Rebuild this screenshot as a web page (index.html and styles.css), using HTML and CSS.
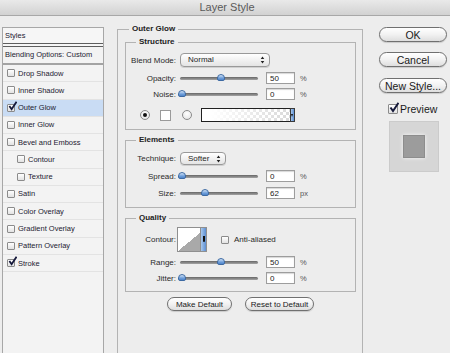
FILE: index.html
```html
<!DOCTYPE html>
<html lang="en">

<head>
    <meta charset="UTF-8">
    <title>Layer Style</title>
    <link rel="stylesheet" href="styles.css">
</head>

<body>
    <div class="window">
        <div class="titlebar">Layer Style</div>

        <div class="dialog">
            <!-- left list of effects -->
            <div class="styles-list">
                <div class="list-head">Styles</div>
                <div class="list-blend">Blending Options: Custom</div>
                <div class="list-item"><span class="cb"></span>Drop Shadow</div>
                <div class="list-item"><span class="cb"></span>Inner Shadow</div>
                <div class="list-item selected"><span class="cb checked"><svg viewBox="0 0 10 11"><path d="M1.5 5.5 L4 9 L9.5 0.8" /></svg></span>Outer Glow</div>
                <div class="list-item"><span class="cb"></span>Inner Glow</div>
                <div class="list-item"><span class="cb"></span>Bevel and Emboss</div>
                <div class="list-item sub"><span class="cb"></span>Contour</div>
                <div class="list-item sub"><span class="cb"></span>Texture</div>
                <div class="list-item"><span class="cb"></span>Satin</div>
                <div class="list-item"><span class="cb"></span>Color Overlay</div>
                <div class="list-item"><span class="cb"></span>Gradient Overlay</div>
                <div class="list-item"><span class="cb"></span>Pattern Overlay</div>
                <div class="list-item"><span class="cb checked"><svg viewBox="0 0 10 11"><path d="M1.5 5.5 L4 9 L9.5 0.8" /></svg></span>Stroke</div>
            </div>

            <!-- settings -->
            <fieldset class="group outer">
                <legend>Outer Glow</legend>

                <fieldset class="group structure">
                    <legend>Structure</legend>
                    <div class="row row-select">
                        <label>Blend Mode:</label>
                        <div class="select blend">Normal<span class="arrows"><svg viewBox="0 0 5 9"><path d="M2.5 0.5 L4.5 3.5 H0.5 Z M2.5 8.5 L4.5 5.5 H0.5 Z" /></svg></span></div>
                    </div>
                    <div class="row">
                        <label>Opacity:</label>
                        <div class="slider"><span class="thumb" style="left:50%"></span></div>
                        <div class="field">50</div><span class="unit">%</span>
                    </div>
                    <div class="row">
                        <label>Noise:</label>
                        <div class="slider"><span class="thumb" style="left:0%"></span></div>
                        <div class="field">0</div><span class="unit">%</span>
                    </div>
                    <div class="row row-color">
                        <span class="radio on"></span>
                        <span class="swatch"></span>
                        <span class="radio"></span>
                        <span class="gradient"></span><span class="grad-arrow"></span>
                    </div>
                </fieldset>

                <fieldset class="group elements">
                    <legend>Elements</legend>
                    <div class="row row-tech">
                        <label>Technique:</label>
                        <div class="select tech">Softer<span class="arrows"><svg viewBox="0 0 5 9"><path d="M2.5 0.5 L4.5 3.5 H0.5 Z M2.5 8.5 L4.5 5.5 H0.5 Z" /></svg></span></div>
                    </div>
                    <div class="row">
                        <label>Spread:</label>
                        <div class="slider"><span class="thumb" style="left:0%"></span></div>
                        <div class="field">0</div><span class="unit">%</span>
                    </div>
                    <div class="row">
                        <label>Size:</label>
                        <div class="slider"><span class="thumb" style="left:29%"></span></div>
                        <div class="field">62</div><span class="unit">px</span>
                    </div>
                </fieldset>

                <fieldset class="group quality">
                    <legend>Quality</legend>
                    <div class="row row-contour">
                        <label>Contour:</label>
                        <div class="contour"><span class="contour-arrow"></span></div>
                        <span class="cb aa"></span><span class="aa-label">Anti-aliased</span>
                    </div>
                    <div class="row">
                        <label>Range:</label>
                        <div class="slider"><span class="thumb" style="left:50%"></span></div>
                        <div class="field">50</div><span class="unit">%</span>
                    </div>
                    <div class="row">
                        <label>Jitter:</label>
                        <div class="slider"><span class="thumb" style="left:0%"></span></div>
                        <div class="field">0</div><span class="unit">%</span>
                    </div>
                </fieldset>

                <div class="defaults">
                    <button class="btn small make">Make Default</button>
                    <button class="btn small reset">Reset to Default</button>
                </div>
            </fieldset>

            <!-- right buttons -->
            <div class="actions">
                <button class="btn big ok">OK</button>
                <button class="btn big cancel">Cancel</button>
                <button class="btn big newstyle">New Style...</button>
                <div class="preview-check">
                    <span class="cb big-cb checked"><svg viewBox="0 0 10 11"><path d="M1.5 5.5 L4 9 L9.5 0.8" /></svg></span>
                    Preview
                </div>
                <div class="preview">
                    <div class="preview-inner"></div>
                </div>
            </div>
        </div>
    </div>
</body>

</html>
```

FILE: styles.css
```css
* {
    margin: 0;
    padding: 0;
    box-sizing: border-box;
}

body {
    font-family: "Liberation Sans", Arial, sans-serif;
    background: #ededed;
}

.window {
    width: 450px;
    height: 353px;
    overflow: hidden;
    background: #ededed;
}

.titlebar {
    height: 16px;
    line-height: 15px;
    text-align: center;
    font-size: 11px;
    color: #5a5a5a;
    padding-left: 4px;
    background: linear-gradient(#e9e9e9, #d2d2d2);
    border-bottom: 1px solid #a8a8a8;
}

.dialog {
    display: flex;
    align-items: flex-start;
    padding-top: 8px;
}

/* list */
.styles-list {
    margin: 3px 0 0 2px;
    width: 102px;
    height: 340px;
    border: 1px solid #a7a7a7;
    background: #f3f3f3;
    font-size: 7.5px;
    color: #1d2132;
}

.list-head {
    height: 19px;
    line-height: 15px;
    padding-left: 2px;
    border-bottom: 4px double #5e5e5e;
    background: #f6f6f6;
}

.list-blend {
    height: 18px;
    line-height: 16px;
    padding-left: 2px;
    border-bottom: 2px solid #a3a3a3;
}

.list-item {
    height: 17.27px;
    display: flex;
    align-items: center;
    padding-left: 4px;
    border-bottom: 1px solid #e3e3e3;
}

.list-item.sub {
    padding-left: 14px;
}

.list-item.selected {
    background: #c9dcf4;
}

.cb {
    position: relative;
    flex: none;
    width: 8px;
    height: 8px;
    margin-right: 3px;
    border: 1px solid #8b8b8b;
    border-radius: 1px;
    background: linear-gradient(#ffffff, #e2e2e2);
}

.cb svg {
    position: absolute;
    left: 0;
    top: -4px;
    width: 9px;
    height: 10px;
    fill: none;
    stroke: #15183a;
    stroke-width: 2;
}

/* settings */
.group {
    border: 1px solid #b3b3b3;
    min-inline-size: 0;
}

.group legend {
    font-size: 8px;
    line-height: 10px;
    font-weight: bold;
    color: #222;
    padding: 0 3px;
    margin-left: 4px;
}

.outer {
    margin-left: 13px;
    width: 246px;
    height: 360px;
    padding: 3px 6px 0 7px;
}

.structure {
    padding: 6px 6px 7px 6px;
}

.elements {
    margin-top: 5px;
    padding: 7px 6px 8px 6px;
}

.quality {
    margin-top: 5px;
    padding: 4px 6px 7px 6px;
}

.row {
    display: flex;
    align-items: center;
    height: 12px;
    margin-top: 4px;
    font-size: 8px;
    color: #2a2a2a;
}

.row label {
    display: flex;
    justify-content: flex-end;
    white-space: nowrap;
    width: 44px;
    margin-right: 4px;
    flex: none;
}

.structure .row:nth-child(3) {
    margin-top: 5px;
}

.row-select {
    height: 14px;
    margin-top: 0;
}

.row-tech {
    height: 13px;
    margin-top: 0;
}

.elements .row + .row {
    margin-top: 5px;
}

.select {
    position: relative;
    height: 100%;
    line-height: 12px;
    padding-left: 7px;
    border: 1px solid #999;
    border-radius: 4px;
    background: linear-gradient(#ffffff, #e4e4e4);
    box-shadow: 0 1px 0 #d0d0d0;
    color: #1f1f1f;
}

.select.blend {
    width: 90px;
}

.select.tech {
    width: 46px;
    line-height: 11px;
}

.arrows {
    position: absolute;
    right: 4px;
    top: 50%;
    margin-top: -4px;
    width: 5px;
    height: 8px;
}

.arrows svg {
    display: block;
    width: 5px;
    height: 8px;
    fill: #222;
}

.slider {
    position: relative;
    width: 78px;
    height: 3px;
    border-radius: 2px;
    background: linear-gradient(#666666, #a4a4a4);
    flex: none;
}

.thumb {
    position: absolute;
    top: -3px;
    width: 8px;
    height: 7px;
    margin-left: -2px;
    border: 1px solid #3d6aa3;
    border-radius: 4px 4px 2px 2px;
    background: linear-gradient(#d4e5f8, #6f9fdb 60%, #4f84c9);
}

.field {
    width: 29px;
    height: 12px;
    margin-left: 8px;
    padding-left: 3px;
    line-height: 11px;
    border: 1px solid #9d9d9d;
    box-shadow: inset 0 1px 1px #d8d8d8;
    background: #fff;
    color: #222;
    flex: none;
}

.unit {
    margin-left: 5px;
    color: #555;
    font-size: 7.5px;
}

.row-color {
    height: 14px;
    margin-top: 8px;
}

.radio {
    width: 10px;
    height: 10px;
    border-radius: 50%;
    border: 1px solid #8a8a8a;
    background: radial-gradient(circle at 50% 35%, #ffffff, #e0e0e0);
    flex: none;
    display: flex;
    align-items: center;
    justify-content: center;
}

.radio.on {
    margin-left: 8px;
}

.radio.on::after {
    content: "";
    width: 4px;
    height: 4px;
    border-radius: 50%;
    background: #111;
}

.swatch {
    width: 11px;
    height: 11px;
    margin-left: 10px;
    margin-right: 11px;
    border: 1px solid #9a9a9a;
    background: #fff;
    flex: none;
}

.gradient {
    width: 89px;
    height: 14px;
    margin-left: 9px;
    border: 1px solid #202020;
    border-right: 0;
    background:
        linear-gradient(to right, #ffffff 10%, rgba(255, 255, 255, 0) 100%),
        conic-gradient(#d9d9d9 25%, #ffffff 0 50%, #d9d9d9 0 75%, #ffffff 0) 0 0 / 6px 6px;
    flex: none;
}

.grad-arrow,
.contour-arrow {
    position: relative;
    width: 5px;
    height: 14px;
    border: 1px solid #3a3a3a;
    background: linear-gradient(to right, #a8c8ee, #5d8fd2);
    flex: none;
}

.grad-arrow::after {
    content: "";
    position: absolute;
    left: 0;
    top: 5px;
    border-left: 1.5px solid transparent;
    border-right: 1.5px solid transparent;
    border-top: 3px solid #111;
}

.row-contour {
    height: 25px;
    margin-top: 0;
}

.contour {
    display: flex;
    justify-content: flex-end;
    width: 30px;
    height: 25px;
    margin-left: -3px;
    border: 1px solid #8f8f8f;
    background: linear-gradient(to bottom right, #ffffff 50%, #a9a9a9 50%);
    flex: none;
}

.contour-arrow {
    width: 6px;
    height: 100%;
    border: 0;
    border-left: 1px solid #8f8f8f;
}

.contour-arrow::after {
    content: "";
    position: absolute;
    left: 1.5px;
    top: 8px;
    width: 2px;
    height: 6px;
    background: #111;
    border-radius: 0 0 1px 1px;
}

.cb.aa {
    margin-left: 14px;
    margin-right: 5px;
}

.aa-label {
    font-size: 8px;
}

.defaults {
    display: flex;
    justify-content: center;
    gap: 13px;
    margin-top: 5px;
}

.btn {
    font-family: "Liberation Sans", Arial, sans-serif;
    border: 1px solid #707070;
    background: linear-gradient(#ffffff, #f2f2f2 50%, #dedede);
    color: #1a1a1a;
    box-shadow: 0 1px 1px rgba(0, 0, 0, 0.15);
}

.btn.small {
    height: 14px;
    border-radius: 7px;
    font-size: 8px;
}

.btn.make {
    width: 65px;
}

.btn.reset {
    width: 69px;
}

/* right side */
.actions {
    margin: 3px 0 0 16px;
    width: 68px;
    display: flex;
    flex-direction: column;
}

.btn.big {
    width: 68px;
    height: 15px;
    border-radius: 8px;
    font-size: 10.5px;
    line-height: 12px;
}

.btn.cancel {
    margin-top: 10px;
}

.btn.newstyle {
    margin-top: 11px;
}

.preview-check {
    display: flex;
    align-items: center;
    margin: 10px 0 0 9px;
    height: 12px;
    font-size: 10.5px;
    color: #1a1a1a;
}

.cb.big-cb {
    width: 10px;
    height: 10px;
    margin-right: 2px;
}

.cb.big-cb svg {
    width: 10px;
    height: 11px;
    top: -3px;
}

.preview {
    margin: 6px 0 0 10px;
    width: 50px;
    height: 51px;
    display: flex;
    align-items: center;
    justify-content: center;
    background: #d6d6d6;
    border: 1px solid #cbcbcb;
}

.preview-inner {
    width: 22px;
    height: 23px;
    background: #9c9c9c;
    border: 1px solid #8d8d8d;
    box-shadow: 0 0 4px rgba(255, 255, 255, 0.8);
}
```
